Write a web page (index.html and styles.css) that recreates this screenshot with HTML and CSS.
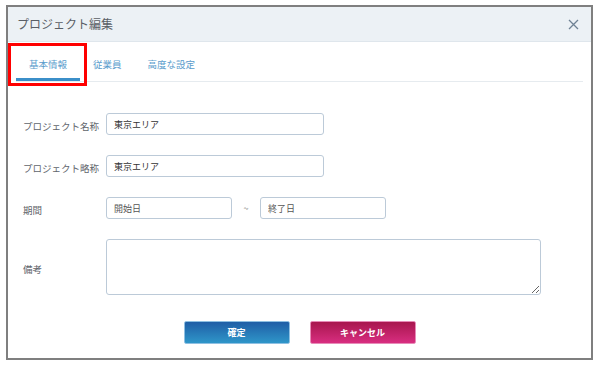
FILE: index.html
```html
<!DOCTYPE html>
<html lang="ja">
<head>
<meta charset="utf-8">
<title>プロジェクト編集</title>
<link rel="stylesheet" href="styles.css">
</head>
<body>
<div class="dialog">
  <div class="dialog-header">
    <span class="dialog-title">プロジェクト編集</span>
    <button class="close-btn" aria-label="閉じる">
      <svg width="11" height="11" viewBox="0 0 11 11"><path d="M1 1 L10 10 M10 1 L1 10" stroke="#6f8294" stroke-width="1.3" fill="none"/></svg>
    </button>
  </div>
  <div class="dialog-body">
    <nav class="tabs">
      <span class="tab active">基本情報</span>
      <span class="tab">従業員</span>
      <span class="tab">高度な設定</span>
    </nav>
    <form class="form">
      <div class="row">
        <label class="label">プロジェクト名称</label>
        <input class="input input-wide" type="text" value="東京エリア">
      </div>
      <div class="row">
        <label class="label">プロジェクト略称</label>
        <input class="input input-wide" type="text" value="東京エリア">
      </div>
      <div class="row">
        <label class="label">期間</label>
        <input class="input input-date" type="text" placeholder="開始日">
        <span class="tilde">~</span>
        <input class="input input-date" type="text" placeholder="終了日">
      </div>
      <div class="row">
        <label class="label">備考</label>
        <textarea class="textarea"></textarea>
      </div>
      <div class="actions">
        <button type="button" class="btn btn-primary">確定</button>
        <button type="button" class="btn btn-danger">キャンセル</button>
      </div>
    </form>
  </div>
  <div class="highlight"></div>
</div>
</body>
</html>
```
FILE: styles.css
```css
* { box-sizing: border-box; }
html, body { margin: 0; padding: 0; background: #ffffff; }
body {
  font-family: "Noto Sans CJK JP", "Noto Sans", "Liberation Sans", sans-serif;
  color: #555;
}
.dialog {
  position: relative;
  width: 587px;
  height: 355px;
  margin: 5px 0 0 6px;
  border: 2px solid #7f7f7f;
  background: #fff;
}
.dialog-header {
  height: 35px;
  background: #ecf1f5;
  border-bottom: 1px solid #dfe6ec;
  display: flex;
  align-items: center;
  justify-content: space-between;
  padding: 0 12px 0 9px;
}
.dialog-title {
  font-size: 12px;
  color: #5a5f66;
  line-height: 1;
}
.close-btn {
  border: 0;
  background: transparent;
  padding: 0;
  width: 11px;
  height: 11px;
  display: flex;
}
.dialog-body {
  padding: 0 8px;
}
.tabs {
  display: flex;
  height: 40px;
  border-bottom: 1px solid #e6ebef;
}
.tab {
  display: flex;
  align-items: center;
  padding: 8px 13px 0;
  border-bottom: 3px solid transparent;
  font-size: 9.5px;
  color: #5a9ccc;
}
.tab.active {
  border-bottom-color: #3b8fc9;
}
.form {
  padding: 31px 0 0 7px;
  display: flex;
  flex-direction: column;
  gap: 20px;
}
.row {
  display: flex;
  align-items: center;
}
.label {
  width: 83px;
  font-size: 9.5px;
  color: #5f656c;
  padding-top: 3px;
}
.input {
  height: 22px;
  border: 1px solid #bccad8;
  border-radius: 3px;
  padding: 0 7px;
  font-family: inherit;
  font-size: 9px;
  color: #333;
  outline: none;
}
.input::placeholder { color: #555; }
.input-wide { width: 218px; }
.input-date { width: 126px; }
.tilde {
  width: 28px;
  text-align: center;
  font-size: 9px;
  color: #777;
}
.textarea {
  width: 435px;
  height: 56px;
  border: 1px solid #bccad8;
  border-radius: 3px;
  font-family: inherit;
  resize: both;
  outline: none;
}
.actions {
  display: flex;
  justify-content: center;
  gap: 20px;
  margin-top: 6px;
  padding-right: 7px;
}
.btn {
  width: 106px;
  height: 23px;
  border: 1px solid transparent;
  border-radius: 2px;
  color: #fff;
  font-family: inherit;
  font-size: 9px;
  font-weight: bold;
  padding: 0;
}
.btn-primary {
  background: linear-gradient(#1f5ea6, #2f96c9);
  border-color: #8fc0e2;
}
.btn-danger {
  background: linear-gradient(#a8164e, #d82e80);
  border-color: #e78bb8;
}
.highlight {
  position: absolute;
  left: 0;
  top: 36px;
  width: 79px;
  height: 43px;
  border: 3px solid #ff0000;
}
```
